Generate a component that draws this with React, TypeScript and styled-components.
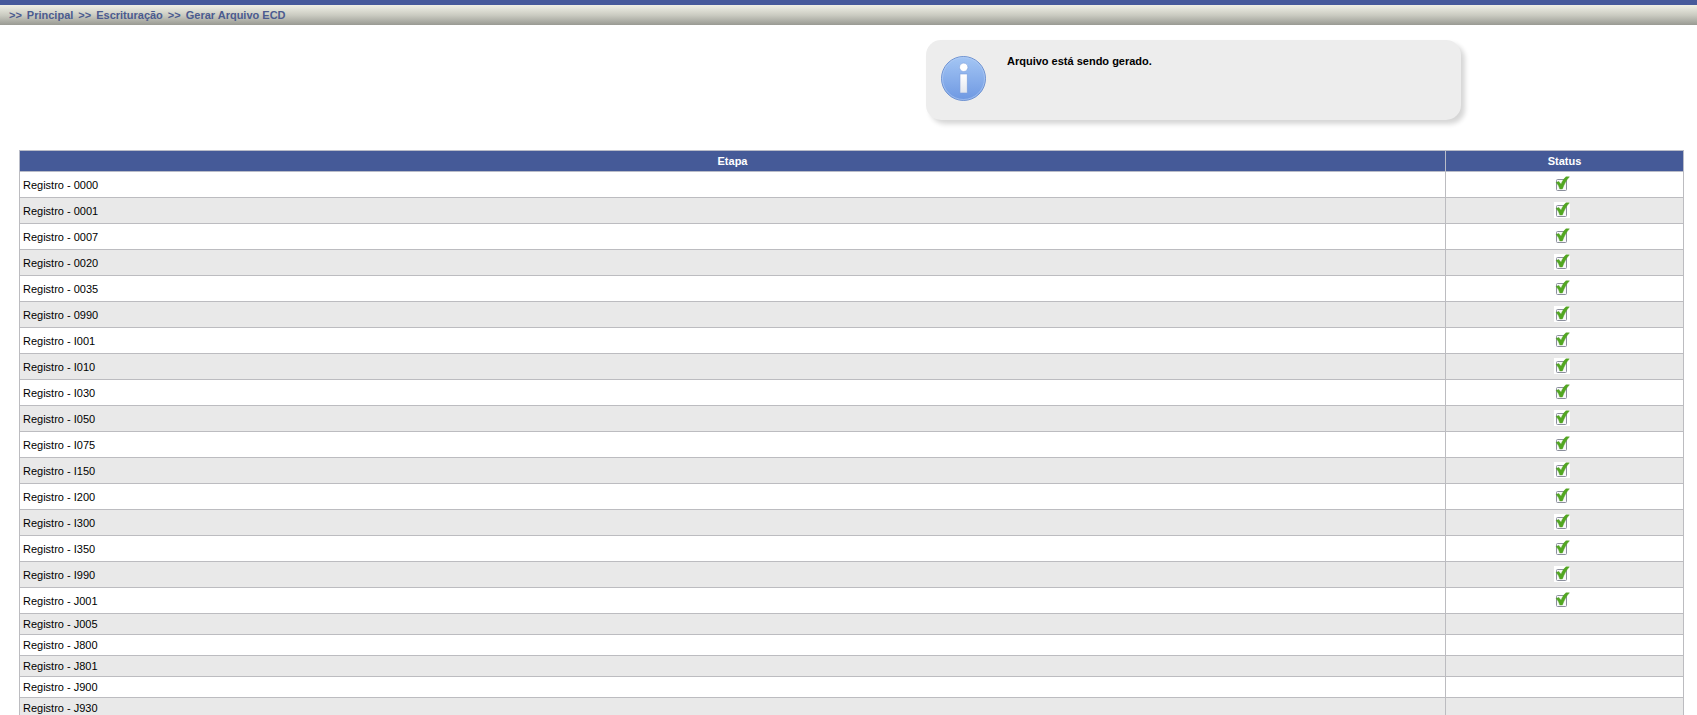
import React from 'react';
import styled, { createGlobalStyle } from 'styled-components';

const GlobalStyle = createGlobalStyle`
  body {
    margin: 0;
    background: #fff;
    color: #000;
    font: 11px/13px "Liberation Sans", Arial, sans-serif;
  }
`;

const Page = styled.div`
  height: 715px;
  overflow: hidden;
`;

const TopStrip = styled.div`
  height: 5px;
  background: #475a9b;
`;

const Breadcrumb = styled.nav`
  display: flex;
  align-items: center;
  gap: 5px;
  box-sizing: border-box;
  height: 20px;
  padding: 0 9px;
  background: linear-gradient(#f0f0e6, #cbccc2 50%, #999a93);
  color: #4b5b8f;
  font-weight: bold;
`;

const Separator = styled.span`
  font-weight: bold;
`;

const Crumb = styled.a`
  color: inherit;
`;

const Message = styled.section`
  display: flex;
  gap: 20px;
  box-sizing: border-box;
  width: 535px;
  height: 80px;
  margin: 15px 0 0 926px;
  padding: 15px;
  border-radius: 15px;
  background: #ededed;
  box-shadow: 4px 4px 5px #d6d6d6;
`;

const MessageText = styled.strong`
  flex: 1;
`;

const Table = styled.table`
  width: 1665px;
  margin: 30px 0 0 19px;
  border-collapse: collapse;
  table-layout: fixed;
`;

const HeadCell = styled.th<{ $width?: number }>`
  box-sizing: border-box;
  width: ${({ $width }) => ($width ? `${$width}px` : 'auto')};
  height: 21px;
  padding: 0;
  border: 1px solid #b9bcc8;
  background: #455a98;
  color: #fff;
`;

const Row = styled.tr<{ $done: boolean }>`
  height: ${({ $done }) => ($done ? 26 : 21)}px;
  &:nth-child(even) {
    background: #e9e9e9;
  }
  td:first-child {
    padding-top: ${({ $done }) => ($done ? 2 : 0)}px;
  }
`;

const Cell = styled.td<{ $center?: boolean }>`
  padding: 0 3px;
  border: 1px solid #bcbcc0;
  text-align: ${({ $center }) => ($center ? 'center' : 'left')};
  vertical-align: middle;
`;

const CheckSvg = styled.svg`
  display: block;
  margin: 0 auto 2px;
  transform: translateX(-3px);
`;

const InfoIcon = () => (
  <svg width="46" height="46" viewBox="0 0 46 46">
    <defs>
      <linearGradient id="disc" x1="0" y1="0" x2="0" y2="1">
        <stop offset="0" stopColor="#a4c6f4" />
        <stop offset="1" stopColor="#6e98e2" />
      </linearGradient>
      <linearGradient id="stem" x1="0" y1="0" x2="0" y2="1">
        <stop offset="0" stopColor="#fff" />
        <stop offset="1" stopColor="#e2e6ee" />
      </linearGradient>
    </defs>
    <circle cx="22.5" cy="23.5" r="22" fill="url(#disc)" stroke="#6f93d2" />
    <circle cx="22.5" cy="23.5" r="21" fill="none" stroke="#b5cef5" strokeOpacity=".6" />
    <circle cx="22.7" cy="12.3" r="4.2" fill="#fff" stroke="#7d9fdc" strokeWidth=".6" />
    <rect x="19" y="19" width="7.2" height="19" fill="url(#stem)" stroke="#7d9fdc" strokeWidth=".6" />
  </svg>
);

const CheckIcon = () => (
  <CheckSvg width="16" height="16" viewBox="0 0 16 16" role="img" aria-label="Concluído">
    <rect width="16" height="16" fill="#fff" />
    <rect x="2.5" y="3.5" width="10" height="11" rx="1" fill="#f9f9fb" stroke="#8b8f9d" />
    <path d="M2 6.6 L4.8 5.4 L7 8.2 C8.4 4.8 10.2 2.2 12 .8 H15.4 C12.5 4 10.1 8.4 8.4 13 H5.8 C5 10.4 3.8 8.2 2 6.6Z" fill="#52a722" stroke="#4b9b1e" strokeWidth=".4" />
  </CheckSvg>
);

const finished = ['0000', '0001', '0007', '0020', '0035', '0990', 'I001', 'I010', 'I030', 'I050', 'I075', 'I150', 'I200', 'I300', 'I350', 'I990', 'J001'];
const pending = ['J005', 'J800', 'J801', 'J900', 'J930'];
const steps = [
  ...finished.map((code) => ({ code, done: true })),
  ...pending.map((code) => ({ code, done: false })),
];

const crumbs = ['Principal', 'Escrituração', 'Gerar Arquivo ECD'];

export default function App() {
  return (
    <Page>
      <GlobalStyle />
      <TopStrip />
      <Breadcrumb>
        {crumbs.map((label) => (
          <React.Fragment key={label}>
            <Separator>&gt;&gt;</Separator>
            <Crumb>{label}</Crumb>
          </React.Fragment>
        ))}
      </Breadcrumb>
      <Message>
        <InfoIcon />
        <MessageText>Arquivo está sendo gerado.</MessageText>
      </Message>
      <Table>
        <thead>
          <tr>
            <HeadCell>Etapa</HeadCell>
            <HeadCell $width={238}>Status</HeadCell>
          </tr>
        </thead>
        <tbody>
          {steps.map(({ code, done }) => (
            <Row key={code} $done={done}>
              <Cell>Registro - {code}</Cell>
              <Cell $center>{done && <CheckIcon />}</Cell>
            </Row>
          ))}
        </tbody>
      </Table>
    </Page>
  );
}
